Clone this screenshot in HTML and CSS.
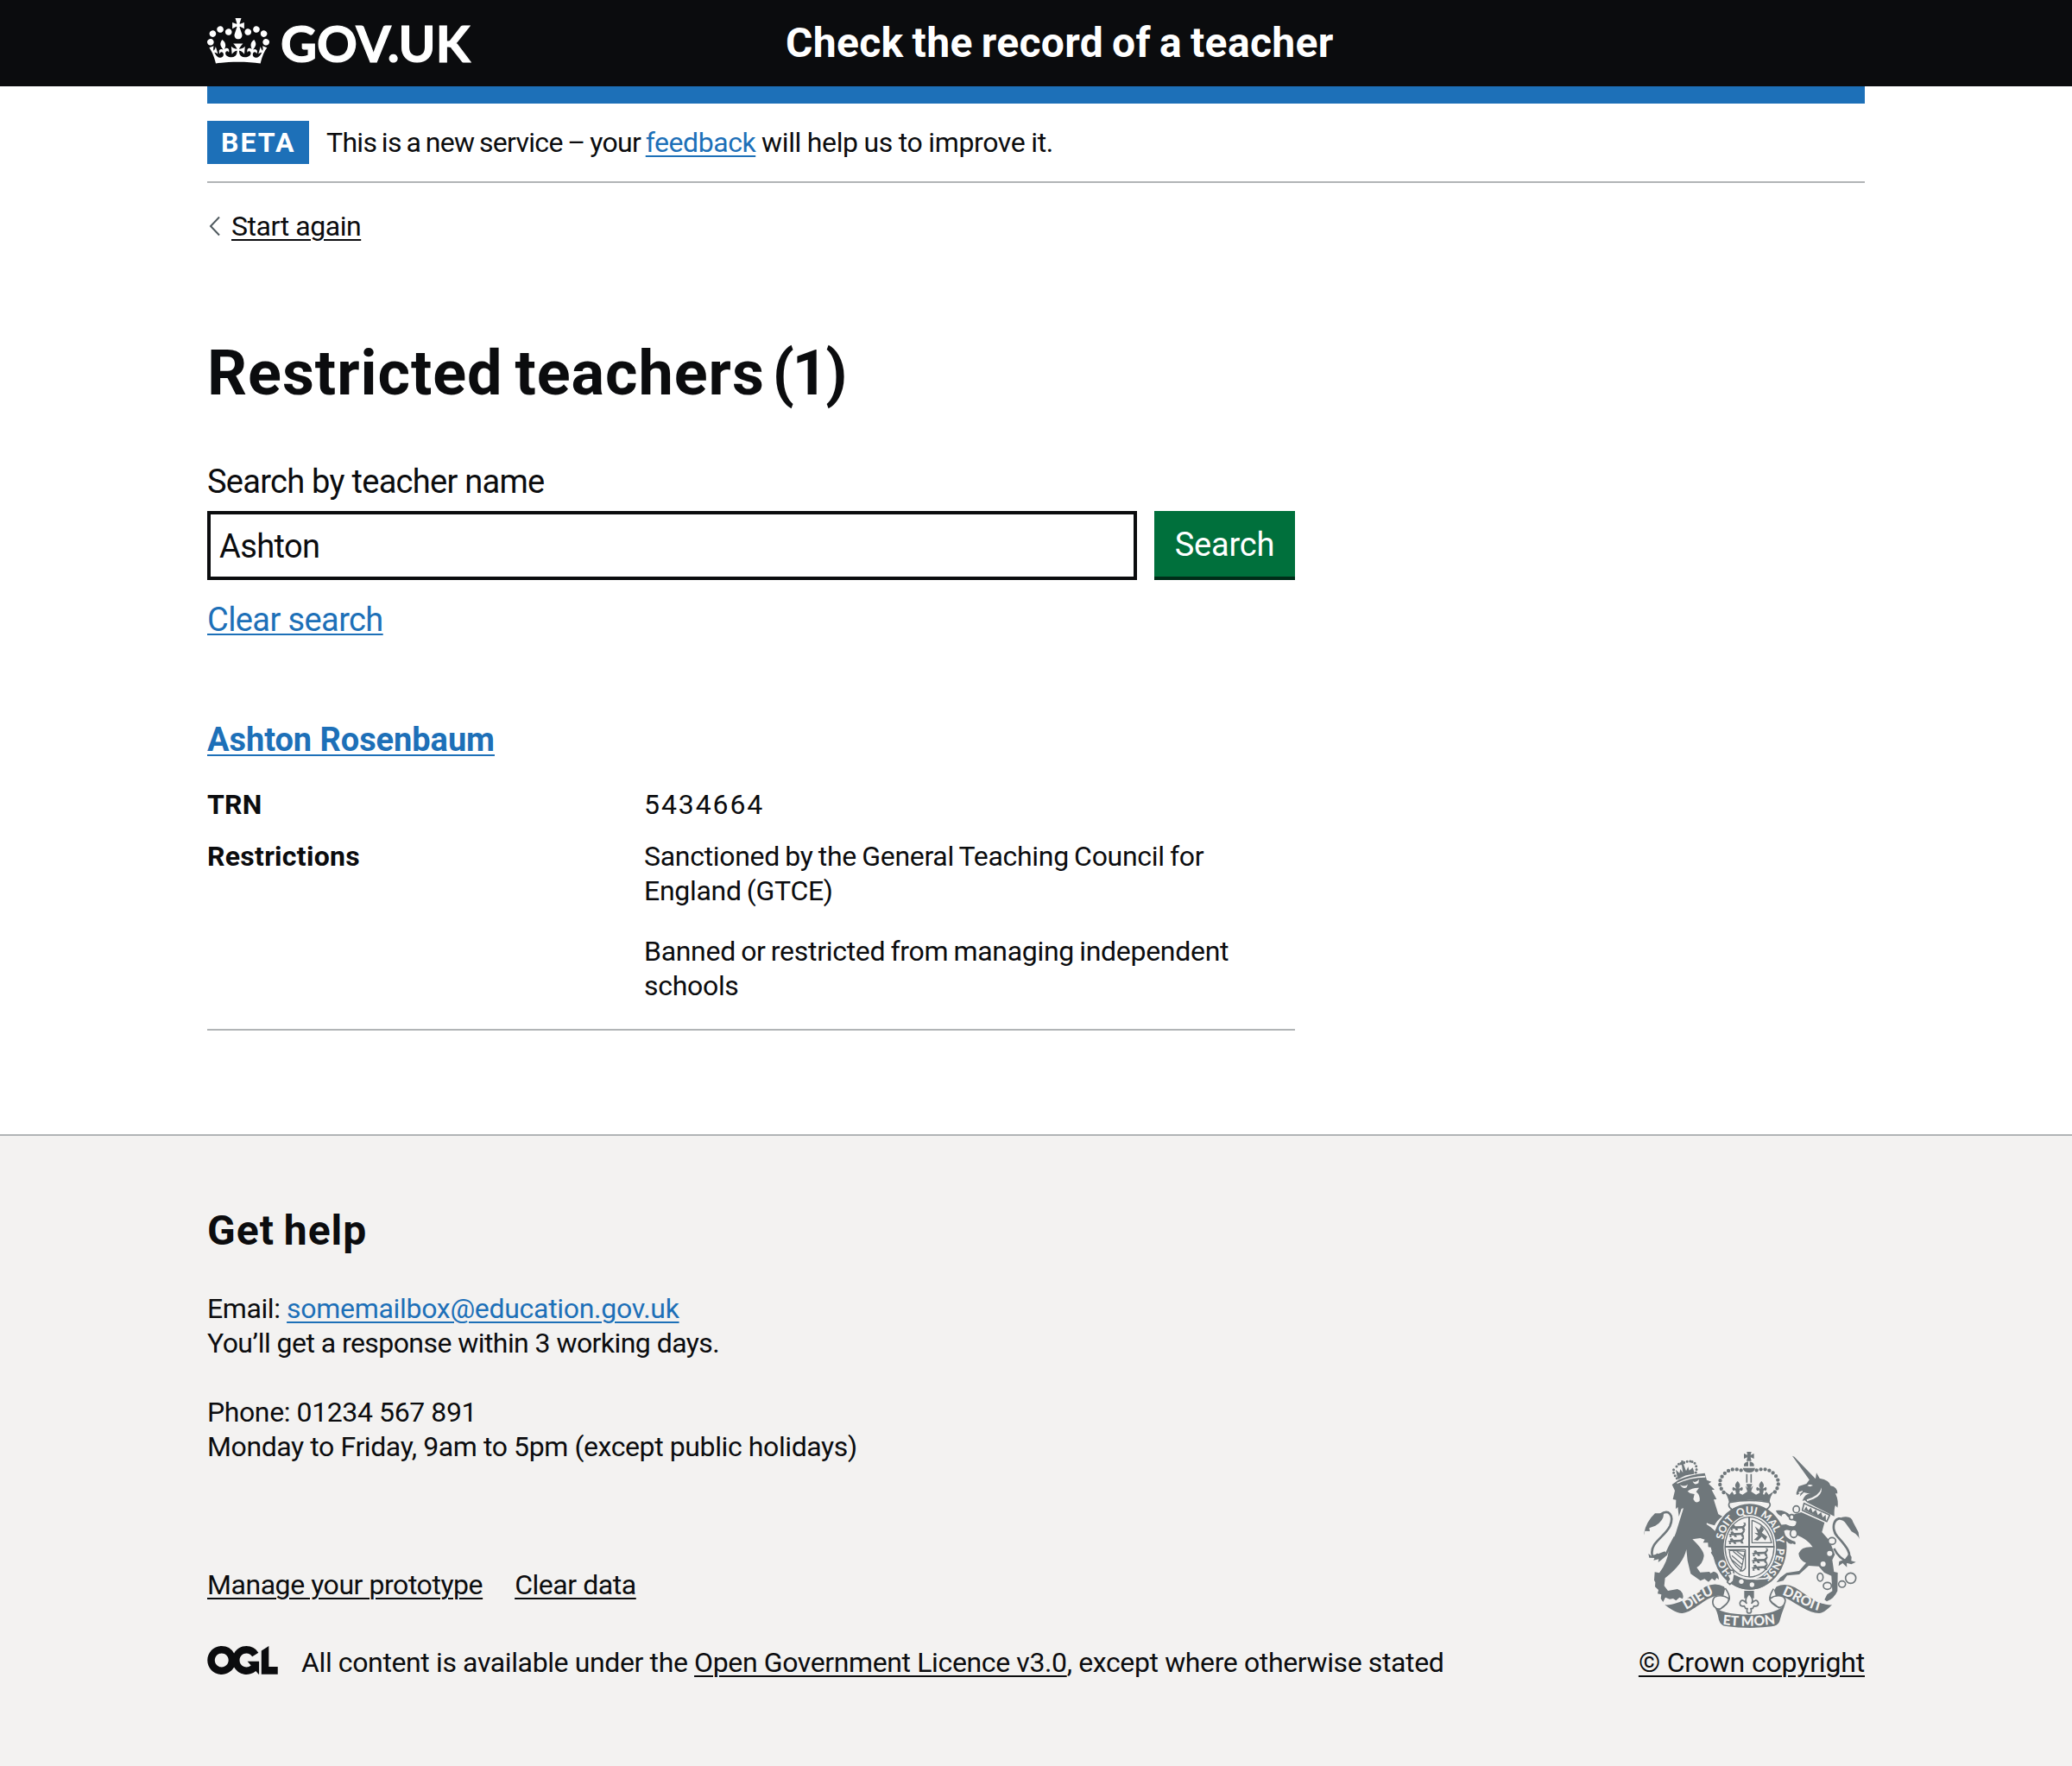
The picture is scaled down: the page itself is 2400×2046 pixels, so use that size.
FILE: index.html
```html
<!DOCTYPE html>
<html lang="en">
<head>
<meta charset="utf-8">
<title>Restricted teachers (1) – Check the record of a teacher</title>
<link rel="stylesheet" href="styles.css">
</head>
<body>
<header class="header">
  <div class="container header-inner">
    <a class="logo" href="#">
      <svg class="crown" viewBox="0 0 132 97" aria-hidden="true"><path fill="currentColor" fill-rule="evenodd" d="M25 30.2c3.5 1.5 7.7-.2 9.1-3.7 1.5-3.6-.2-7.8-3.9-9.2-3.6-1.4-7.6.3-9.1 3.9-1.4 3.5.3 7.5 3.9 9zM9 39.5c3.6 1.5 7.8-.2 9.2-3.7 1.5-3.6-.2-7.8-3.9-9.1-3.6-1.5-7.6.2-9.1 3.8-1.4 3.5.3 7.5 3.8 9zM4.4 57.2c3.5 1.5 7.7-.2 9.1-3.8 1.5-3.6-.2-7.7-3.9-9.1-3.5-1.5-7.6.3-9.1 3.8-1.4 3.5.3 7.6 3.9 9.1zm38.3-21.4c3.5 1.5 7.7-.2 9.1-3.8 1.5-3.6-.2-7.7-3.9-9.1-3.6-1.5-7.6.3-9.1 3.8-1.3 3.6.4 7.7 3.9 9.1zm64.4-5.6c-3.6 1.5-7.8-.2-9.1-3.7-1.5-3.6.2-7.8 3.8-9.2 3.6-1.4 7.7.3 9.2 3.9 1.3 3.5-.4 7.5-3.9 9zm15.9 9.3c-3.6 1.5-7.7-.2-9.1-3.7-1.5-3.6.2-7.8 3.7-9.1 3.6-1.5 7.7.2 9.2 3.8 1.5 3.5-.3 7.5-3.8 9zm4.7 17.7c-3.6 1.5-7.8-.2-9.2-3.8-1.5-3.6.2-7.7 3.9-9.1 3.6-1.5 7.7.3 9.2 3.8 1.3 3.5-.4 7.6-3.9 9.1zM89.3 35.8c-3.6 1.5-7.8-.2-9.2-3.8-1.4-3.6.2-7.7 3.9-9.1 3.6-1.5 7.7.3 9.2 3.8 1.4 3.6-.3 7.7-3.9 9.1zM69.7 17.7l8.9 4.7V9.3l-8.9 2.8c-.2-.3-.5-.6-.9-.9L72.4 0H59.6l3.5 11.2c-.3.3-.6.5-.9.9l-8.8-2.8v13.1l8.8-4.7c.3.3.6.7.9.9l-5 15.4v.1c-.2.8-.4 1.6-.4 2.4 0 4.1 3.1 7.5 7 8.1h.2c.3 0 .7.1 1 .1.4 0 .7 0 1-.1h.2c4-.6 7.1-4.1 7.1-8.1 0-.8-.1-1.7-.4-2.4V34l-5.1-15.4c.4-.2.7-.6 1-.9zM66 92.8c16.9 0 32.8 1.1 47.1 3.2 4-16.9 8.9-26.7 14-33.5l-9.6-3.4c1 4.9 1.1 7.2 0 10.2-1.5-1.4-3-4.3-4.2-8.7L108.6 76c2.8-2 5-3.2 7.5-3.3-4.4 9.4-10 11.9-13.6 11.2-4.3-.8-6.3-4.6-5.6-7.9 1-4.7 5.7-5.9 8-.5 4.3-8.7-3-11.4-7.6-8.8 7.1-7.2 7.9-13.5 2.1-21.1-8 6.1-8.1 12.3-4.5 20.8-4.7-5.4-12.1-2.5-9.5 6.2 3.4-5.2 7.9-2 7.2 3.1-.6 4.3-6.4 7.8-13.5 7.2-10.3-.9-10.9-8-11.2-13.8 2.5-.5 7.1 1.8 11 7.3L80.2 60c-4.1 4.4-8 5.3-12.3 5.4 1.4-4.4 8-11.6 8-11.6H55.5s6.4 7.2 7.9 11.6c-4.2-.1-8-1-12.3-5.4l1.4 16.4c3.9-5.5 8.5-7.7 10.9-7.3-.3 5.8-.9 12.8-11.1 13.8-7.2.6-12.9-2.9-13.5-7.2-.7-5 3.8-8.3 7.1-3.1 2.7-8.7-4.6-11.6-9.4-6.2 3.7-8.5 3.6-14.7-4.6-20.8-5.8 7.6-5 13.9 2.2 21.1-4.7-2.6-11.9.1-7.7 8.8 2.3-5.5 7.1-4.2 8.1.5.7 3.3-1.3 7.1-5.7 7.9-3.5.7-9-1.8-13.5-11.2 2.5.1 4.7 1.3 7.5 3.3l-4.7-15.4c-1.2 4.4-2.7 7.2-4.3 8.7-1.1-3-.9-5.3 0-10.2l-9.5 3.4c5 6.9 9.9 16.7 14 33.5 14.8-2.1 30.8-3.2 47.7-3.2z"/></svg>
      <span class="logo-text">GOV.UK</span>
    </a>
    <a class="service-name" href="#">Check the record of a teacher</a>
  </div>
</header>

<div class="container">
  <div class="blue-bar"></div>
  <div class="phase-banner">
    <strong class="tag">BETA</strong>
    <span class="phase-text"><span class="phase-lead">This is a new service – your </span><a class="link" href="#">feedback</a><span class="phase-tail"> will help us to improve it.</span></span>
  </div>
  <a class="back-link" href="#"><svg class="chevron" viewBox="0 0 14 24" aria-hidden="true"><path d="M12 1.500 2 12l10 10.500" fill="none" stroke="#505a5f" stroke-width="2"/></svg><span class="back-text">Start again</span></a>

  <main class="main">
    <h1 class="heading-xl">Restricted teachers <span class="count">(1)</span></h1>
    <form class="search">
      <label class="label" for="name">Search by teacher name</label>
      <div class="search-row">
        <input class="input" id="name" type="text" value="Ashton">
        <button class="button" type="button">Search</button>
      </div>
      <a class="link clear-search" href="#">Clear search</a>
    </form>
    <h2 class="result-name"><a class="link" href="#">Ashton Rosenbaum</a></h2>
    <dl class="summary">
      <div class="row"><dt class="key">TRN</dt><dd class="value digits">5434664</dd></div>
      <div class="row">
        <dt class="key">Restrictions</dt>
        <dd class="value">
          <p class="restriction">Sanctioned by the General Teaching Council for England (GTCE)</p>
          <p class="restriction">Banned or restricted from managing independent schools</p>
        </dd>
      </div>
    </dl>
  </main>
</div>

<footer class="footer">
  <div class="container footer-inner">
    <div class="footer-main">
      <h2 class="heading-m">Get help</h2>
      <p class="contact">Email: <a class="link email" href="#">somemailbox@education.gov.uk</a><br><span class="response">You’ll get a response within 3 working days.</span></p>
      <p class="contact">Phone: 01234 567 891<br>Monday to Friday, 9am to 5pm (except public holidays)</p>
      <ul class="footer-links">
        <li><a class="footer-link" href="#">Manage your prototype</a></li>
        <li><a class="footer-link" href="#">Clear data</a></li>
      </ul>
      <div class="licence">
        <svg class="ogl" viewBox="0 0 483.2 195.7" aria-hidden="true"><path fill="currentColor" d="M421.500 142.800V.1l-50.700 32.300v161.100h112.400v-50.700zm-122.300-9.600A47.120 47.120 0 0 1 221 97.800c0-26 21.100-47.100 47.100-47.100 16.700 0 31.400 8.700 39.700 21.800l42.700-27.200A97.630 97.630 0 0 0 268.100 0c-36.500 0-68.300 20.100-85.100 49.700A98 98 0 0 0 97.800 0C43.900 0 0 43.900 0 97.800s43.900 97.800 97.800 97.800c36.500 0 68.300-20.100 85.100-49.700a97.760 97.760 0 0 0 149.600 25.400l19.400 22.200h3v-87.800h-80l24.300 27.500zM97.800 145c-26 0-47.100-21.100-47.100-47.100s21.100-47.100 47.100-47.100 47.100 21.100 47.100 47.100S123.800 145 97.800 145"/></svg>
        <span class="licence-text">All content is available under the <a class="footer-link" href="#">Open Government Licence v3.0</a>, except where otherwise stated</span>
      </div>
    </div>
    <div class="copyright">
      <svg class="arms" viewBox="72 66 750 612" aria-hidden="true">
        <defs>
          <path id="belt" d="M440 512A95 115 0 0 1 440 282A95 115 0 0 1 440 512" pathLength="100"/>
          <path id="dieu" d="M206 620C250 604 275 572 330 556"/>
          <path id="mon" d="M340 665Q438 678 535 663"/>
          <path id="droit" d="M544 560C590 572 625 607 694 622"/>
          <g id="lily"><path d="M0-22C9-13 11-6 4 4L16-2C22 8 14 14 8 9L5 24H-5L-8 9C-14 14-22 8-16-2L-4 4C-11-6-9-13 0-22Z"/></g>
          <g id="passant"><path d="M0 6 9 3 7-3 15-5 20 1 45 0 52-7 47-12 55-12 57-4 51 5 55 14H47L43 8 27 9 30 15H22L18 9 9 10 12 16H4L5 9Z"/></g>
        </defs>
        <g class="ink">
          <!-- supporters' crown and lion -->
          <path d="M187 158C176 144 170 130 180 123M253 138C260 120 250 98 236 100" class="dots small"/>
          <path d="M186 117Q193 105 204 106M212 103Q226 96 240 101" class="dots small"/>
          <path d="M189 156 183 128 196 140 199 126 208 139 204 112 197 112V103H202V96H209V102H215V109H210L219 133 226 118 230 131 242 121 248 139 246 143Q214 145 193 161Z"/>
          <path d="M170 180 194 163Q234 145 284 140L291 164 307 170 297 177 318 197 308 199 325 231 315 232 331 283 345 290Q325 305 318 322L291 314 338 356 342 382 347 392 339 415 331 400 329 424 320 407 309 415 305 398 296 397 295 382 278 382 284 371 268 366 241 370Q281 408 281 428 277 455 256 468L268 485 300 483 304 488 315 482Q333 485 333 510L325 504 319 514 309 506 297 518 283 508 269 514 235 490 224 444 220 405Q210 455 146 505L143 532 156 549 189 543 200 549Q213 562 207 577L196 572 184 583 174 576 162 578 147 572 139 588 131 576 133 562 120 559 123 546 111 535 112 520 108 512 110 484 126 487Q155 447 158 410L183 349 210 262 203 264 194 291 190 258 183 265 184 233 173 231 180 201Z"/>
          <path d="M130 284C157 264 179 284 163 324 145 362 93 382 101 423Q104 435 122 422M148 425Q164 390 180 362" class="tail"/>
          <path d="M71 358Q78 310 111 280L141 280Q143 305 112 323L91 331 93 342 76 341Z"/>
          <path d="M88 420 100 429 145 412 154 424Q133 443 122 450L124 439 106 443 109 435 91 434Z"/>
          <g class="cut">
            <path d="M198 180Q212 190 225 179L221 190Q207 196 198 180ZM242 168Q252 176 264 162L262 175Q247 184 242 168ZM224 203Q240 190 264 191L254 205Q269 218 266 237 253 248 244 231L248 213 233 210Z"/>
            <path d="M291 313Q322 332 339 355L336 359Q315 333 290 318Z"/>
            <path d="M286 155Q236 154 188 177L187 173Q235 150 286 149Z"/>
          </g>
          <!-- unicorn -->
          <path d="M588 80 595 83 668 159 649 166Z"/>
          <path d="M602 209 610 186 637 177 650 160 669 159 672 139 683 158Q718 164 721 184 745 188 745 211L738 211Q750 237 745 260L738 252Q733 262 734 290L716 281 640 242 632 235 623 236Q634 207 653 213L628 207 614 221 617 211 603 216Z"/>
          <path class="cut" d="M640 184Q648 176 660 183L650 187ZM690 190Q692 219 661 230L640 238 638 232Q683 219 690 190ZM610 206 624 201 623 206 612 213Z"/>
          <path d="M629 245 718 286 708 308 623 269Z" fill="none" class="line"/>
          <path d="M629 268 637 256 643 270 653 260 659 277 670 267 677 286 688 276 694 294 704 285 705 307Z"/>
          <path d="M619 276 700 312 691 345 717 374 736 423 727 442 733 483 746 486 745 550Q733 577 708 586L700 580 709 562 727 550 724 497 699 486 680 464 645 462 612 492 570 496 557 514 533 520 546 503 568 487 612 480 636 452Q611 442 610 419 620 394 659 397 640 369 607 357 600 337 580 340 562 333 556 347 572 371 598 378 603 393 590 385 577 389 570 378 554 374 530 331 535 320 566 318 602 335 602 308 577 301 563 281 548 283 552 291 534 283 531 270 560 266 582 287 601 300Z"/>
          <path d="M775 307C735 276 717 332 746 362 774 393 803 425 775 451M733 402Q750 437 784 450" class="tail"/>
          <path d="M758 294Q794 286 799 310L818 346 821 370Q817 354 794 343L774 315Z"/>
          <path d="M785 420 794 431 793 445 809 449 793 457 777 452 778 467 763 453 749 463 751 447 770 440Z"/>
          <g class="chain"><ellipse cx="602" cy="266" rx="11" ry="12"/><ellipse cx="586" cy="293" rx="8" ry="9"/><ellipse cx="593" cy="350" rx="12" ry="14"/><ellipse cx="726" cy="376" rx="13" ry="12"/><ellipse cx="685" cy="502" rx="10" ry="14"/><ellipse cx="710" cy="532" rx="14" ry="12"/><ellipse cx="761" cy="526" rx="12" ry="11"/><circle cx="791" cy="505" r="18"/></g>
          <g class="cut"><circle cx="718" cy="419" r="9"/><circle cx="695" cy="456" r="9"/></g>
          <!-- central crown -->
          <path d="M430 66H446L443 77 455 72V90L443 85 446 98H429L432 85 420 90V72L432 77ZM420 116Q418 103 435 100V116ZM440 116V100Q457 103 455 116ZM416 122H459Q457 138 438 138 419 138 416 122Z"/>
          <path d="M410 130Q378 120 355 139 320 171 351 209M464 130Q498 120 521 139 556 171 525 209" class="dots"/>
          <path d="M430 143V173M445 143V173" class="line"/>
          <path d="M350 202 370 215 379 204 386 215 400 208 415 215 432 204 425 184 433 193 428 178H449L443 193 452 184 445 204 462 215 476 208 490 215 497 204 506 215 526 202Q511 220 509 241 438 226 368 241 364 219 350 202Z"/>
          <use href="#lily" x="398" y="190"/><use href="#lily" x="481" y="190"/>
          <path d="M370 242Q438 228 508 242 517 253 498 267 438 242 379 267 362 256 370 242Z" class="line cut"/>
          <!-- belt and shield -->
          <path fill-rule="evenodd" d="M440 247A129 149 0 1 1 439 247ZM440 286A91 112 0 1 0 441 286Z"/>
          <path class="thin" d="M440 293A85 104 0 1 1 439 293Z"/>
          <path d="M438 292V500M354 396H526" class="cross"/>
          <g transform="translate(370 324)"><use href="#passant"/><use href="#passant" x="-4" y="23"/><use href="#passant" x="-6" y="47"/></g>
          <g transform="translate(447 413)"><use href="#passant"/><use href="#passant" x="-1" y="25"/><use href="#passant" x="-1" y="50"/></g>
          <path class="thin" d="M448 304Q503 322 516 382H448ZM365 406H425V470Q418 483 405 480M370 408Q366 445 410 479L424 412ZM382 412 419 442M395 412 419 430M378 427 415 459M378 441 410 469"/>
          <path d="M458 325 473 337 480 322 490 336 482 347 501 361 494 374 482 361 468 375 455 372 470 358 456 347 469 349Z"/>
          <g class="motto">
            <text><textPath href="#belt" startOffset="14.500">HO</textPath></text>
            <text><textPath href="#belt" startOffset="35">SOIT</textPath></text>
            <text><textPath href="#belt" startOffset="48.500">QUI</textPath></text>
            <text><textPath href="#belt" startOffset="61.500">MAL</textPath></text>
            <text><textPath href="#belt" startOffset="71.500">Y</textPath></text>
            <text><textPath href="#belt" startOffset="84">PENSE</textPath></text>
          </g>
          <path d="M319 400 330 427 318 437 305 416Z"/>
          <path class="line cut" d="M362 494 374 490 370 479 382 477 387 493 384 515 371 527 362 519 369 508Z"/>
          <path d="M386 501Q445 530 512 515 486 545 440 545 405 545 378 524Z"/>
          <path d="M384 490Q440 518 518 503" class="gap"/>
          <g class="cut"><circle cx="411" cy="517" r="8"/><circle cx="448" cy="528" r="8"/></g>
          <!-- flower below the belt -->
          <path d="M421 549H455V575H421Z"/>
          <path class="line cut" d="M438 560Q455 577 447 592 464 573 470 591 471 605 455 602L450 611H444Q449 627 438 627 427 627 432 611H426L421 602Q405 605 406 591 412 573 429 592 421 577 438 560Z"/>
          <!-- scroll -->
          <path d="M145 598C193 602 253 558 286 535Q321 518 351 535L370 574Q335 559 312 570C276 583 234 628 204 627 184 627 164 612 145 598Z"/>
          <path d="M726 598C680 601 628 557 598 538Q563 520 533 535L507 574Q544 560 568 575C605 594 645 627 681 627 697 627 714 610 726 598Z"/>
          <path class="line cut" d="M355 540C385 583 363 590 340 611Q327 616 316 603 306 586 318 571 343 560 366 575 372 590 338 612M523 542C494 588 520 588 536 604Q548 612 559 598 570 577 555 569 530 561 510 577 507 590 544 609"/>
          <path d="M313 598Q335 632 438 632 530 632 563 597 550 630 543 657 536 672 516 673 438 683 358 672 339 670 333 650 327 617 313 598Z"/>
          <g class="motto"><text class="big"><textPath href="#dieu" startOffset="50%">DIEU</textPath></text><text class="big"><textPath href="#mon" startOffset="50%">ET MON</textPath></text><text class="big"><textPath href="#droit" startOffset="50%">DROIT</textPath></text></g>
        </g>
      </svg>
      <a class="footer-link copyright-link" href="#">© Crown copyright</a>
    </div>
  </div>
</footer>
</body>
</html>
```
FILE: styles.css
```css
* { box-sizing: border-box; }
body {
  margin: 0;
  background: #fff;
  color: #0b0c0e;
  font: 400 32px/40px Roboto, "Liberation Sans", sans-serif;
  letter-spacing: -0.45px;
}
h1, h2, p, dl, dd, ul { margin: 0; padding: 0; }
a { color: inherit; text-decoration-thickness: 2px; text-underline-offset: 4px; }
.container { width: 1920px; margin: 0 auto; }
.link { color: #1d70b8; }

.header { height: 100px; background: #0b0c0e; color: #fff; }
.header-inner { display: flex; align-items: flex-start; }
.logo { display: flex; width: 670px; padding-top: 21px; text-decoration: none; }
.crown { width: 72px; height: 53px; margin-right: 13px; }
.logo-text { margin-top: -1px; font: 700 58px/60px Lato, sans-serif; letter-spacing: 0; -webkit-text-stroke: 1.2px currentColor; }
.service-name { padding-top: 20px; font-size: 48px; line-height: 60px; font-weight: 700; letter-spacing: 0.35px; word-spacing: -2.3px; text-decoration: none; }

.blue-bar { height: 20px; background: #1d70b8; }
.phase-banner { display: flex; align-items: center; gap: 20px; height: 92px; border-bottom: 2px solid #b1b4b6; }
.tag { height: 50px; width: 118px; padding-left: 16px; line-height: 51px; background: #1d70b8; color: #fff; letter-spacing: 2px; }
.phase-text { white-space: pre; }
.phase-lead { letter-spacing: -0.7px; word-spacing: -1.6px; }
.phase-tail { letter-spacing: -0.35px; word-spacing: -0.8px; }
.back-link { display: flex; align-items: center; width: max-content; margin-top: 30px; text-decoration: none; }
.chevron { width: 14px; height: 24px; margin: 0 12px 0 2px; }
.back-text { text-decoration: underline 2px; text-underline-offset: 4px; }

.main { width: 1260px; padding-top: 111px; }
.heading-xl { font-size: 72px; line-height: 80px; font-weight: 700; letter-spacing: 0.95px; word-spacing: -5px; }
.count { margin-left: -5px; letter-spacing: -2.5px; }
.search { display: flex; flex-direction: column; align-items: flex-start; padding-top: 60px; font-size: 38px; line-height: 50px; letter-spacing: -0.6px; }
.label { letter-spacing: -0.72px; }
.search-row { display: flex; gap: 20px; width: 100%; margin: 9px 0 21px; }
.input { flex: 1; height: 80px; padding: 2px 10px 0; border: 4px solid #0b0c0e; border-radius: 0; background: #fff; color: #0b0c0e; font: inherit; letter-spacing: -0.6px; }
.button { width: 163px; height: 76px; padding: 2px 0 0; border: 0; box-shadow: 0 4px 0 #002d18; background: #00703c; color: #fff; font: inherit; letter-spacing: -0.2px; }
.clear-search { text-underline-offset: 3px; }
.result-name { padding-top: 89px; font-size: 38px; line-height: 50px; font-weight: 700; letter-spacing: -0.06px; }
.summary { margin-top: 30px; padding-bottom: 30px; border-bottom: 2px solid #b1b4b6; }
.row { display: flex; }
.row + .row { margin-top: 20px; }
.key { width: 506px; font-weight: 700; letter-spacing: 0.27px; }
.value { width: 704px; }
.digits { letter-spacing: 1.9px; }
.restriction { letter-spacing: -0.3px; word-spacing: -1.4px; }
.restriction + .restriction { margin-top: 30px; }

.footer { margin-top: 120px; height: 732px; border-top: 2px solid #b1b4b6; background: #f3f2f1; }
.footer-inner { display: flex; justify-content: space-between; align-items: flex-end; padding-top: 80px; }
.heading-m { font-size: 48px; line-height: 60px; font-weight: 700; letter-spacing: 1px; word-spacing: -2px; }
.contact { padding-top: 40px; letter-spacing: -0.4px; }
.email { letter-spacing: -0.3px; }
.response { letter-spacing: -0.56px; }
.footer-links { display: flex; gap: 37px; padding-top: 120px; list-style: none; }
.licence { display: flex; gap: 27px; margin-top: 50px; letter-spacing: -0.38px; }
.ogl { width: 82px; height: 33px; margin-top: 1px; }

.copyright { display: flex; flex-direction: column; align-items: flex-end; gap: 20px; }
.copyright-link { letter-spacing: -0.17px; }
.arms { width: 250px; height: 204px; margin-right: 6px; }
.ink { fill: #6f777b; stroke-linejoin: round; }
.ink .cut { fill: #f3f2f1; }
.ink .line { stroke: #6f777b; stroke-width: 5; }
.ink .thin { fill: none; stroke: #6f777b; stroke-width: 4; }
.ink .cross { fill: none; stroke: #6f777b; stroke-width: 6; }
.ink .tail { fill: none; stroke: #6f777b; stroke-width: 8; }
.ink .gap { fill: none; stroke: #f3f2f1; stroke-width: 5; }
.ink .chain { fill: #f3f2f1; stroke: #6f777b; stroke-width: 5; }
.ink .dots { fill: none; stroke: #6f777b; stroke-width: 13; stroke-linecap: round; stroke-dasharray: 0 15; }
.ink .small { stroke-width: 9; stroke-dasharray: 0 11; }
.motto { fill: #f3f2f1; font: 900 36px Lato, sans-serif; text-anchor: middle; letter-spacing: 0; }
.motto .big { font-size: 47px; }
```
